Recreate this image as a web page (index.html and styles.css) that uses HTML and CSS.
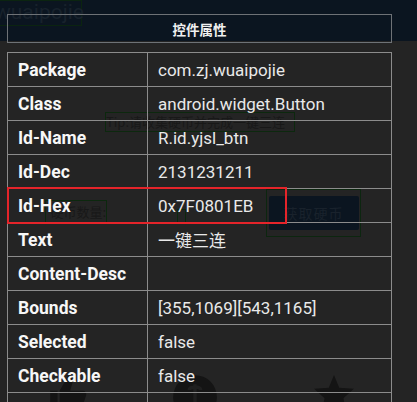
FILE: index.html
```html
<!DOCTYPE html>
<html lang="zh">
<head>
<meta charset="utf-8">
<link rel="stylesheet" href="styles.css">
</head>
<body>
<div class="ghost-layer" aria-hidden="true">
  <div class="ghost ghost-brand">wuaipojie</div>
  <div class="ghost ghost-tip">Tip:请收集硬币并完成一键三连</div>
  <div class="ghost ghost-count">硬币数量:</div>
  <div class="ghost ghost-zero"></div>
  <div class="ghost ghost-btn"><span>获取硬币</span></div>
  <svg class="ghost ghost-like" viewBox="0 0 40 40"><path d="M4 16h7v22H4zM13 16l8-14c4 0 5 3 4 7l-2 7h12c3 0 4 3 3 5l-5 15c-1 2-2 3-4 3H13z" fill="#141414"/></svg>
  <svg class="ghost ghost-coin" viewBox="0 0 40 40"><circle cx="20" cy="20" r="19" fill="#141414"/><path d="M20 9v22M15 14c0-3 10-4 10 0" stroke="#1f1f1f" stroke-width="3" fill="none"/></svg>
  <svg class="ghost ghost-star" viewBox="0 0 40 40"><path d="M20 1l5 12 14 1-10 9 3 15-12-8-12 8 3-15L1 14l14-1z" fill="#141414"/></svg>
</div>

<div class="dialog">
  <div class="title">控件属性</div>
  <table class="props">
    <tr><td class="k">Package</td><td class="v">com.zj.wuaipojie</td></tr>
    <tr><td class="k">Class</td><td class="v">android.widget.Button</td></tr>
    <tr><td class="k">Id-Name</td><td class="v">R.id.yjsl_btn</td></tr>
    <tr><td class="k">Id-Dec</td><td class="v">2131231211</td></tr>
    <tr><td class="k">Id-Hex</td><td class="v">0x7F0801EB</td></tr>
    <tr><td class="k">Text</td><td class="v">一键三连</td></tr>
    <tr><td class="k">Content-Desc</td><td class="v"></td></tr>
    <tr><td class="k">Bounds</td><td class="v">[355,1069][543,1165]</td></tr>
    <tr><td class="k">Selected</td><td class="v">false</td></tr>
    <tr><td class="k">Checkable</td><td class="v">false</td></tr>
    <tr><td class="k">Checked</td><td class="v">false</td></tr>
  </table>
  <div class="highlight"></div>
</div>
</body>
</html>
```
FILE: styles.css
```css
html, body {
  margin: 0;
  padding: 0;
}
body {
  width: 417px;
  height: 402px;
  overflow: hidden;
  position: relative;
  background: linear-gradient(to bottom, #0b1520 0, #0b1520 41px, #242424 41px, #242424 100%);
  font-family: Roboto, "Noto Sans CJK SC", sans-serif;
  color: #f2f2f2;
}

.ghost-layer {
  position: absolute;
  inset: 0;
  z-index: 0;
}
.ghost {
  position: absolute;
}
.ghost-brand {
  left: -6px;
  top: 0;
  width: 86px;
  height: 24px;
  border: 1px solid #0b2410;
  color: #18222c;
  font-size: 21px;
  line-height: 22px;
}
.ghost-tip {
  left: 105px;
  top: 112px;
  width: 188px;
  height: 18px;
  border: 1px solid #0c280e;
  color: #181818;
  font-family: "Noto Sans CJK SC", sans-serif;
  font-size: 13px;
  line-height: 18px;
  white-space: nowrap;
}
.ghost-count {
  left: 45px;
  top: 200px;
  width: 60px;
  height: 21px;
  border: 1px solid #0c280e;
  color: #181818;
  font-family: "Noto Sans CJK SC", sans-serif;
  font-size: 13px;
  line-height: 21px;
  text-align: right;
}
.ghost-zero {
  left: 177px;
  top: 209px;
  width: 7px;
  height: 12px;
  border: 1px solid #0c280e;
}
.ghost-btn {
  left: 266px;
  top: 189px;
  width: 93px;
  height: 46px;
  border: 1px solid #0c260f;
  display: flex;
  align-items: center;
  justify-content: center;
}
.ghost-btn span {
  display: flex;
  align-items: center;
  justify-content: center;
  width: 90px;
  height: 34px;
  background: #0b1520;
  border-radius: 2px;
  color: #19222c;
  font-family: "Noto Sans CJK SC", sans-serif;
  font-size: 14px;
  letter-spacing: 1px;
}
.ghost-like { left: 46px; top: 374px; width: 42px; height: 42px; }
.ghost-coin { left: 172px; top: 374px; width: 46px; height: 46px; }
.ghost-star { left: 313px; top: 374px; width: 42px; height: 42px; }

.dialog {
  position: relative;
  z-index: 1;
  padding: 14px 0 0 7px;
  width: 385px;
}
.title {
  box-sizing: border-box;
  width: 385px;
  height: 29px;
  border: 1px solid #6e7276;
  display: flex;
  align-items: center;
  justify-content: center;
  font-family: "Noto Sans CJK SC", sans-serif;
  font-weight: 700;
  font-size: 13.5px;
  color: #f0f0f0;
}
.props {
  margin-top: 9px;
  width: 385px;
  border-collapse: collapse;
  table-layout: fixed;
}
.props td {
  height: 34px;
  padding: 0 0 0 10px;
  border: 1px solid #8c8c8c;
  box-sizing: border-box;
  white-space: nowrap;
}
.props td.k {
  width: 140px;
  font-weight: 700;
  font-size: 17.5px;
  color: #f7f7f7;
}
.props td.v {
  font-size: 17px;
  color: #e9e9e9;
}
.highlight {
  position: absolute;
  left: 7px;
  top: 187px;
  width: 276px;
  height: 33px;
  border: 2px solid #e5242a;
}
```
